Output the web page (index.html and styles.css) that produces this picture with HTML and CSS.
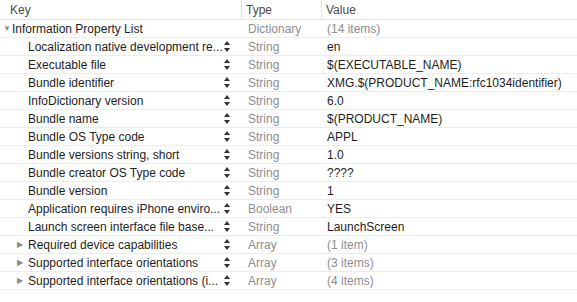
FILE: index.html
```html
<!DOCTYPE html>
<html>
<head>
    <meta charset="UTF-8">
    <title>Info.plist</title>
    <link rel="stylesheet" href="styles.css">
</head>
<body>
    <div class="plist">
        <div class="row head">
            <div class="cell key">Key</div>
            <div class="cell type">Type</div>
            <div class="cell value">Value</div>
        </div>

        <div class="row">
            <div class="cell key top"><span class="arrow open">&#9660;</span><span class="name">Information Property List</span></div>
            <div class="cell type">Dictionary</div>
            <div class="cell value dim">(14 items)</div>
        </div>

        <!-- long keys are shown shortened, like the editor does -->
        <div class="row">
            <div class="cell key child"><span class="name">Localization native development re...</span><span class="stepper"><i class="up"></i><i class="down"></i></span></div>
            <div class="cell type">String</div>
            <div class="cell value">en</div>
        </div>
        <div class="row">
            <div class="cell key child"><span class="name">Executable file</span><span class="stepper"><i class="up"></i><i class="down"></i></span></div>
            <div class="cell type">String</div>
            <div class="cell value">$(EXECUTABLE_NAME)</div>
        </div>
        <div class="row">
            <div class="cell key child"><span class="name">Bundle identifier</span><span class="stepper"><i class="up"></i><i class="down"></i></span></div>
            <div class="cell type">String</div>
            <div class="cell value">XMG.$(PRODUCT_NAME:rfc1034identifier)</div>
        </div>
        <div class="row">
            <div class="cell key child"><span class="name">InfoDictionary version</span><span class="stepper"><i class="up"></i><i class="down"></i></span></div>
            <div class="cell type">String</div>
            <div class="cell value">6.0</div>
        </div>
        <div class="row">
            <div class="cell key child"><span class="name">Bundle name</span><span class="stepper"><i class="up"></i><i class="down"></i></span></div>
            <div class="cell type">String</div>
            <div class="cell value">$(PRODUCT_NAME)</div>
        </div>
        <div class="row">
            <div class="cell key child"><span class="name">Bundle OS Type code</span><span class="stepper"><i class="up"></i><i class="down"></i></span></div>
            <div class="cell type">String</div>
            <div class="cell value">APPL</div>
        </div>
        <div class="row">
            <div class="cell key child"><span class="name">Bundle versions string, short</span><span class="stepper"><i class="up"></i><i class="down"></i></span></div>
            <div class="cell type">String</div>
            <div class="cell value">1.0</div>
        </div>
        <div class="row">
            <div class="cell key child"><span class="name">Bundle creator OS Type code</span><span class="stepper"><i class="up"></i><i class="down"></i></span></div>
            <div class="cell type">String</div>
            <div class="cell value">????</div>
        </div>
        <div class="row">
            <div class="cell key child"><span class="name">Bundle version</span><span class="stepper"><i class="up"></i><i class="down"></i></span></div>
            <div class="cell type">String</div>
            <div class="cell value">1</div>
        </div>
        <div class="row">
            <div class="cell key child"><span class="name">Application requires iPhone enviro...</span><span class="stepper"><i class="up"></i><i class="down"></i></span></div>
            <div class="cell type">Boolean</div>
            <div class="cell value">YES</div>
        </div>
        <div class="row">
            <div class="cell key child"><span class="name">Launch screen interface file base...</span><span class="stepper"><i class="up"></i><i class="down"></i></span></div>
            <div class="cell type">String</div>
            <div class="cell value">LaunchScreen</div>
        </div>
        <div class="row">
            <div class="cell key group"><span class="arrow">&#9654;</span><span class="name">Required device capabilities</span><span class="stepper"><i class="up"></i><i class="down"></i></span></div>
            <div class="cell type">Array</div>
            <div class="cell value dim">(1 item)</div>
        </div>
        <div class="row">
            <div class="cell key group"><span class="arrow">&#9654;</span><span class="name">Supported interface orientations</span><span class="stepper"><i class="up"></i><i class="down"></i></span></div>
            <div class="cell type">Array</div>
            <div class="cell value dim">(3 items)</div>
        </div>
        <div class="row">
            <div class="cell key group"><span class="arrow">&#9654;</span><span class="name">Supported interface orientations (i...</span><span class="stepper"><i class="up"></i><i class="down"></i></span></div>
            <div class="cell type">Array</div>
            <div class="cell value dim">(4 items)</div>
        </div>
    </div>
</body>
</html>
```

FILE: styles.css
```css
html, body {
    margin: 0;
    padding: 0;
    background: #fff;
}
.plist {
    font: 12px "Liberation Sans", Arial, sans-serif;
    color: #1e1e1e;
}
.row {
    display: grid;
    grid-template-columns: 241px 80px 1fr;
    height: 18px;
    border-bottom: 1px solid #ececec;
    box-sizing: border-box;
    align-items: center;
}
.row.head {
    height: 20px;
    border-bottom: 1px solid #e2e2e2;
    color: #4a4a4a;
}
.head .cell {
    height: 100%;
    display: flex;
    align-items: center;
}
.head .type,
.head .value {
    border-left: 1px solid #e4e4e4;
    padding-left: 4px;
    color: #4a4a4a;
}
.head .key {
    padding-left: 10px;
}
.cell {
    white-space: nowrap;
    overflow: hidden;
    line-height: 18px;
}
.key {
    display: flex;
    align-items: center;
    min-width: 0;
}
.key .name {
    overflow: hidden;
    min-width: 0;
}
.key.top {
    padding-left: 3px;
}
.key.child {
    padding-left: 28px;
}
.key.group {
    padding-left: 17px;
}
.key.child .name,
.key.group .name {
    flex: 0 0 196px;
}
.arrow {
    color: #8a8a8a;
    font-size: 8px;
    width: 11px;
    flex: none;
}
.arrow.open {
    width: 9px;
}
.stepper {
    display: flex;
    flex-direction: column;
    gap: 3px;
    margin-left: 0;
}
.stepper i {
    display: block;
    width: 0;
    height: 0;
    border-left: 3px solid transparent;
    border-right: 3px solid transparent;
}
.stepper .up {
    border-bottom: 4px solid #333;
}
.stepper .down {
    border-top: 4px solid #333;
}
.type {
    padding-left: 7px;
    color: #8e8e8e;
}
.value {
    padding-left: 6px;
}
.value.dim {
    color: #8e8e8e;
}
```
